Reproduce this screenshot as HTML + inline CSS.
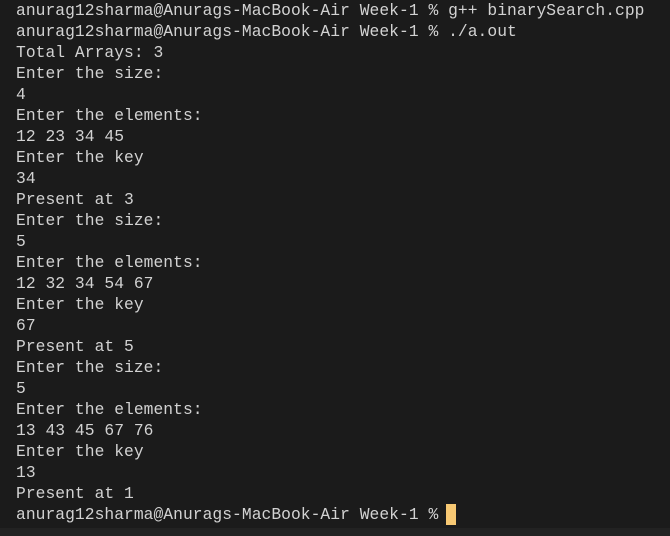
<!DOCTYPE html>
<html><head><style>
html,body{margin:0;padding:0;background:#1b1b1b;width:670px;height:536px;overflow:hidden}
pre{margin:0;padding:0 0 0 16px;font-family:"Liberation Mono",monospace;font-size:16.3px;line-height:21px;letter-spacing:0.05px;color:#d2d2d2;white-space:pre}
.cur{display:inline-block;width:10px;height:21px;background:#f7c873;vertical-align:top;margin-left:8px}
.bot{position:absolute;left:0;top:528px;width:670px;height:8px;background:#222}
</style></head><body>
<pre>anurag12sharma@Anurags-MacBook-Air Week-1 % g++ binarySearch.cpp
anurag12sharma@Anurags-MacBook-Air Week-1 % ./a.out
Total Arrays: 3
Enter the size:
4
Enter the elements:
12 23 34 45
Enter the key
34
Present at 3
Enter the size:
5
Enter the elements:
12 32 34 54 67
Enter the key
67
Present at 5
Enter the size:
5
Enter the elements:
13 43 45 67 76
Enter the key
13
Present at 1
anurag12sharma@Anurags-MacBook-Air Week-1 %<span class="cur"></span></pre>
<div class="bot"></div>
</body></html>
